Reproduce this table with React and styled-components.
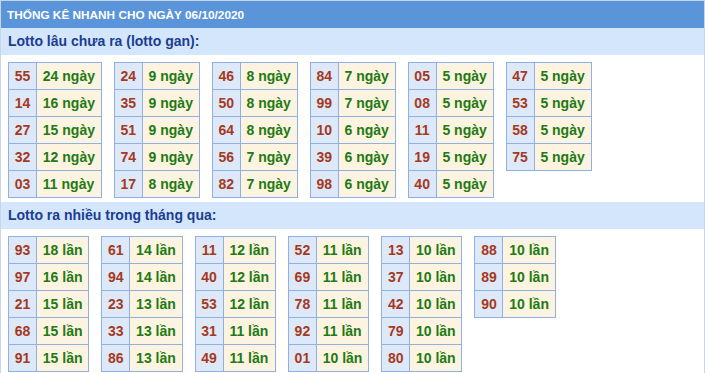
import styled, { createGlobalStyle } from "styled-components";

const GlobalStyle = createGlobalStyle`
  body {
    margin: 0;
    background: #ffffff;
    font-family: "Liberation Sans", Arial, sans-serif;
  }
`;

const ganTables = [
  [["55", 24], ["14", 16], ["27", 15], ["32", 12], ["03", 11]],
  [["24", 9], ["35", 9], ["51", 9], ["74", 9], ["17", 8]],
  [["46", 8], ["50", 8], ["64", 8], ["56", 7], ["82", 7]],
  [["84", 7], ["99", 7], ["10", 6], ["39", 6], ["98", 6]],
  [["05", 5], ["08", 5], ["11", 5], ["19", 5], ["40", 5]],
  [["47", 5], ["53", 5], ["58", 5], ["75", 5]],
];

const hotTables = [
  [["93", 18], ["97", 16], ["21", 15], ["68", 15], ["91", 15]],
  [["61", 14], ["94", 14], ["23", 13], ["33", 13], ["86", 13]],
  [["11", 12], ["40", 12], ["53", 12], ["31", 11], ["49", 11]],
  [["52", 11], ["69", 11], ["78", 11], ["92", 11], ["01", 10]],
  [["13", 10], ["37", 10], ["42", 10], ["79", 10], ["80", 10]],
  [["88", 10], ["89", 10], ["90", 10]],
];

function StatTable({ rows, unit }) {
  return (
    <Table>
      <tbody>
        {rows.map(([num, count]) => (
          <tr key={num}>
            <NumCell>{num}</NumCell>
            <ValueCell>
              {count} {unit}
            </ValueCell>
          </tr>
        ))}
      </tbody>
    </Table>
  );
}

export default function App() {
  return (
    <>
      <GlobalStyle />
      <Box>
        <Title>THỐNG KÊ NHANH CHO NGÀY 06/10/2020</Title>
        <SectionHead>Lotto lâu chưa ra (lotto gan):</SectionHead>
        <Tables>
          {ganTables.map((rows, i) => (
            <StatTable key={i} rows={rows} unit="ngày" />
          ))}
        </Tables>
        <SectionHead>Lotto ra nhiều trong tháng qua:</SectionHead>
        <Tables>
          {hotTables.map((rows, i) => (
            <StatTable key={i} rows={rows} unit="lần" />
          ))}
        </Tables>
      </Box>
    </>
  );
}

const Box = styled.div`
  width: 705px;
  height: 373px;
  box-sizing: border-box;
  overflow: hidden;
  border: 1px solid #c6d5ea;
  border-bottom: none;
  background: #ffffff;
`;

const Title = styled.div`
  height: 27px;
  line-height: 28px;
  margin: 0 -1px;
  padding: 0 7px;
  background-color: #5b95d9;
  color: #ffffff;
  font-size: 11.8px;
  font-weight: bold;
`;

const SectionHead = styled.div`
  height: 27px;
  line-height: 27px;
  padding: 0 7px;
  background-color: #d4e6fb;
  color: #1b3d93;
  font-size: 14px;
  font-weight: bold;
`;

const Tables = styled.div`
  display: flex;
  align-items: flex-start;
  gap: 12px;
  padding: 7px 7px 4px;
`;

const Table = styled.table`
  border-collapse: collapse;
  font-size: 14px;
  font-weight: bold;
  td {
    border: 1px solid #8fb0e2;
    height: 27px;
    padding: 0 5.75px;
    line-height: 16px;
    white-space: nowrap;
    box-sizing: border-box;
  }
`;

const NumCell = styled.td`
  background-color: #dde9f9;
  color: #a5391d;
  text-align: center;
`;

const ValueCell = styled.td`
  background-color: #fdf3e1;
  color: #217a12;
  text-align: left;
`;
